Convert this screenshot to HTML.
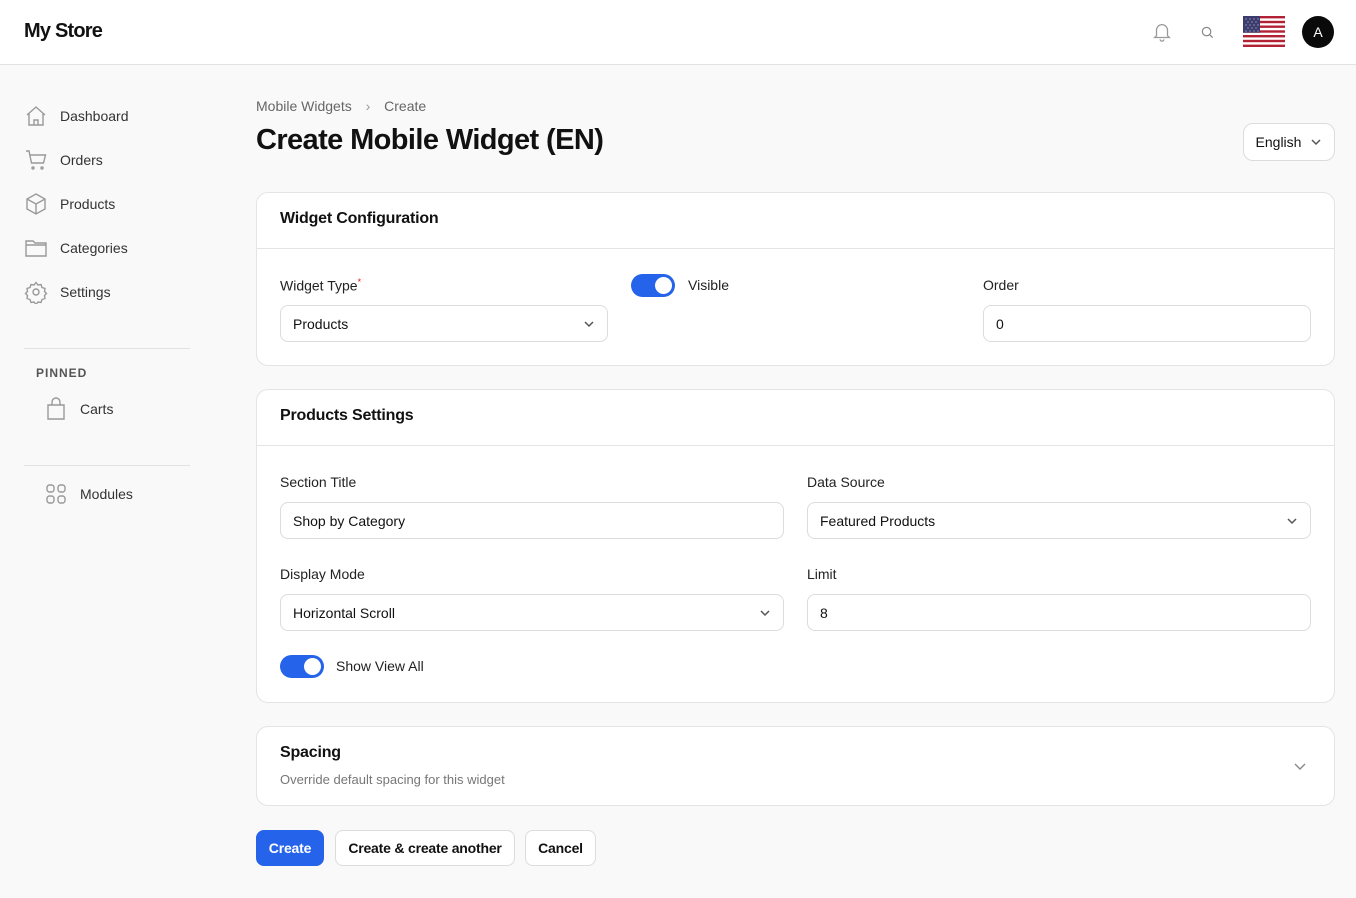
<!DOCTYPE html>
<html><head><meta charset="utf-8"><style>
*{box-sizing:border-box;margin:0;padding:0}
body{width:1356px;height:898px;background:#f9f9f9;font-family:"Liberation Sans",sans-serif;color:#111;position:relative;overflow:hidden;font-size:14px}
.a{position:absolute}
.hdr{left:0;top:0;width:1356px;height:65px;background:#fff;border-bottom:1px solid #e2e2e2}
.nav{left:24px;font-size:14px;color:#333;display:flex;align-items:center}
.nav svg{width:24px;height:24px;margin-right:12px;stroke:#999;fill:none;stroke-width:1.4}
.card{background:#fff;border:1px solid #e4e4e4;border-radius:12px}
.ch{font-size:16px;font-weight:bold;letter-spacing:-0.2px}
.lbl{font-size:14px;color:#222}
.inp{background:#fff;border:1px solid #dcdcdc;border-radius:8px;height:37px;padding:0 12px;display:flex;align-items:center;justify-content:space-between;font-size:14px;color:#111}
.tg{width:44px;height:23px;border-radius:12px;background:#2563eb}
.tg:after{content:"";position:absolute;right:3px;top:3px;width:17px;height:17px;border-radius:50%;background:#fff}
.btn{height:36px;border-radius:8px;border:1px solid #dcdcdc;background:#fff;font-weight:bold;font-size:14px;display:flex;align-items:center;justify-content:center;letter-spacing:-0.2px}
</style></head><body>
<div class="a hdr"></div>
<div class="a" style="left:24px;top:20px;font-size:20px;font-weight:bold;letter-spacing:-0.8px">My Store</div>
<svg class="a" style="left:1151px;top:21px" width="22" height="22" viewBox="0 0 24 24" fill="none" stroke="#999" stroke-width="1.4"><path d="M6 16V10a6 6 0 0 1 12 0v6l2 2H4z"/><path d="M10 20a2 2 0 0 0 4 0"/></svg>
<svg class="a" style="left:1200px;top:25px" width="15" height="15" viewBox="0 0 16 16" fill="none" stroke="#888" stroke-width="1.3"><circle cx="7" cy="7" r="4.5"/><path d="M10.5 10.5l3 3"/></svg>
<svg class="a" style="left:1243px;top:16px" width="42" height="31" viewBox="0 0 42 31">
<rect width="42" height="31" fill="#fff"/>
<g fill="#b22234"><rect y="0" width="42" height="2.4"/><rect y="4.8" width="42" height="2.4"/><rect y="9.5" width="42" height="2.4"/><rect y="14.3" width="42" height="2.4"/><rect y="19" width="42" height="2.4"/><rect y="23.8" width="42" height="2.4"/><rect y="28.6" width="42" height="2.4"/></g>
<rect width="17" height="16.7" fill="#3c3b6e"/>
<g fill="#fff" opacity="0.7"><circle cx="3" cy="3" r=".6"/><circle cx="7" cy="3" r=".6"/><circle cx="11" cy="3" r=".6"/><circle cx="15" cy="3" r=".6"/><circle cx="5" cy="6" r=".6"/><circle cx="9" cy="6" r=".6"/><circle cx="13" cy="6" r=".6"/><circle cx="3" cy="9" r=".6"/><circle cx="7" cy="9" r=".6"/><circle cx="11" cy="9" r=".6"/><circle cx="15" cy="9" r=".6"/><circle cx="5" cy="12" r=".6"/><circle cx="9" cy="12" r=".6"/><circle cx="13" cy="12" r=".6"/><circle cx="3" cy="15" r=".6"/><circle cx="7" cy="15" r=".6"/><circle cx="11" cy="15" r=".6"/><circle cx="15" cy="15" r=".6"/></g></svg>
<div class="a" style="left:1302px;top:16px;width:32px;height:32px;border-radius:50%;background:#0a0a0a;color:#fff;font-size:14px;display:flex;align-items:center;justify-content:center">A</div>

<div class="a nav" style="top:104px"><svg viewBox="0 0 24 24"><path d="M3 11l9-8 9 8M5 9.5V21h14V9.5M10 21v-5h4v5"/></svg>Dashboard</div>
<div class="a nav" style="top:148px"><svg viewBox="0 0 24 24"><path d="M2 3h3l2.5 12h12l2-8H6"/><circle cx="9" cy="20" r="1"/><circle cx="18" cy="20" r="1"/></svg>Orders</div>
<div class="a nav" style="top:192px"><svg viewBox="0 0 24 24"><path d="M12 2l9 5v10l-9 5-9-5V7zM3 7l9 5 9-5M12 12v10"/></svg>Products</div>
<div class="a nav" style="top:236px"><svg viewBox="0 0 24 24"><path d="M2 5h7l2 2h11v13H2zM2 9h20"/></svg>Categories</div>
<div class="a nav" style="top:280px"><svg viewBox="0 0 24 24"><circle cx="12" cy="12" r="3"/><path d="M12 2.5l2 2.5 3-.5 1 3 3 1-.5 3 2 2-2 2 .5 3-3 1-1 3-3-.5-2 2.5-2-2.5-3 .5-1-3-3-1 .5-3-2-2 2-2-.5-3 3-1 1-3 3 .5z"/></svg>Settings</div>
<div class="a" style="left:24px;top:348px;width:166px;border-top:1px solid #e2e2e2"></div>
<div class="a" style="left:36px;top:366px;font-size:12px;font-weight:bold;color:#555;letter-spacing:1px">PINNED</div>
<div class="a nav" style="left:44px;top:397px"><svg viewBox="0 0 24 24"><path d="M4 8h16v14H4zM8 8V5a4 4 0 0 1 8 0v3"/></svg>Carts</div>
<div class="a" style="left:24px;top:465px;width:166px;border-top:1px solid #e2e2e2"></div>
<div class="a nav" style="left:44px;top:482px"><svg viewBox="0 0 24 24"><rect x="3" y="3" width="7" height="7" rx="2.5"/><rect x="14" y="3" width="7" height="7" rx="2.5"/><rect x="3" y="14" width="7" height="7" rx="2.5"/><rect x="14" y="14" width="7" height="7" rx="2.5"/></svg>Modules</div>

<div class="a" style="left:256px;top:98px;font-size:14px;color:#666">Mobile Widgets <span style="margin:0 10px;color:#999">›</span> Create</div>
<div class="a" style="left:256px;top:124px;font-size:29px;font-weight:bold;letter-spacing:-0.6px">Create Mobile Widget (EN)</div>
<div class="a btn" style="left:1243px;top:123px;width:92px;height:38px;font-weight:normal;border-radius:10px;letter-spacing:0">English <svg style="margin-left:9px" width="12" height="8" viewBox="0 0 12 8" fill="none" stroke="#555" stroke-width="1.5"><path d="M2 2l4 4 4-4"/></svg></div>

<div class="a card" style="left:256px;top:192px;width:1079px;height:174px"></div>
<div class="a" style="left:256px;top:248px;width:1079px;border-top:1px solid #e4e4e4"></div>
<div class="a ch" style="left:280px;top:210px">Widget Configuration</div>
<div class="a lbl" style="left:280px;top:277px">Widget Type<sup style="color:#e11;font-size:9px">*</sup></div>
<div class="a inp" style="left:280px;top:305px;width:328px">Products<svg width="12" height="8" viewBox="0 0 12 8" fill="none" stroke="#555" stroke-width="1.5"><path d="M2 2l4 4 4-4"/></svg></div>
<div class="a tg" style="left:631px;top:274px"></div>
<div class="a lbl" style="left:688px;top:277px">Visible</div>
<div class="a lbl" style="left:983px;top:277px">Order</div>
<div class="a inp" style="left:983px;top:305px;width:328px">0</div>

<div class="a card" style="left:256px;top:389px;width:1079px;height:314px"></div>
<div class="a" style="left:256px;top:445px;width:1079px;border-top:1px solid #e4e4e4"></div>
<div class="a ch" style="left:280px;top:407px">Products Settings</div>
<div class="a lbl" style="left:280px;top:474px">Section Title</div>
<div class="a inp" style="left:280px;top:502px;width:504px">Shop by Category</div>
<div class="a lbl" style="left:807px;top:474px">Data Source</div>
<div class="a inp" style="left:807px;top:502px;width:504px">Featured Products<svg width="12" height="8" viewBox="0 0 12 8" fill="none" stroke="#555" stroke-width="1.5"><path d="M2 2l4 4 4-4"/></svg></div>
<div class="a lbl" style="left:280px;top:566px">Display Mode</div>
<div class="a inp" style="left:280px;top:594px;width:504px">Horizontal Scroll<svg width="12" height="8" viewBox="0 0 12 8" fill="none" stroke="#555" stroke-width="1.5"><path d="M2 2l4 4 4-4"/></svg></div>
<div class="a lbl" style="left:807px;top:566px">Limit</div>
<div class="a inp" style="left:807px;top:594px;width:504px">8</div>
<div class="a tg" style="left:280px;top:655px"></div>
<div class="a lbl" style="left:336px;top:658px">Show View All</div>

<div class="a card" style="left:256px;top:726px;width:1079px;height:80px"></div>
<div class="a ch" style="left:280px;top:744px">Spacing</div>
<div class="a" style="left:280px;top:772px;font-size:13px;color:#777">Override default spacing for this widget</div>
<svg class="a" style="left:1293px;top:762px" width="14" height="9" viewBox="0 0 14 9" fill="none" stroke="#888" stroke-width="1.4"><path d="M2 2l5 5 5-5"/></svg>

<div class="a btn" style="left:256px;top:830px;width:68px;background:#2563eb;border-color:#2563eb;color:#fff">Create</div>
<div class="a btn" style="left:335px;top:830px;width:180px">Create &amp; create another</div>
<div class="a btn" style="left:525px;top:830px;width:71px">Cancel</div>
</body></html>
